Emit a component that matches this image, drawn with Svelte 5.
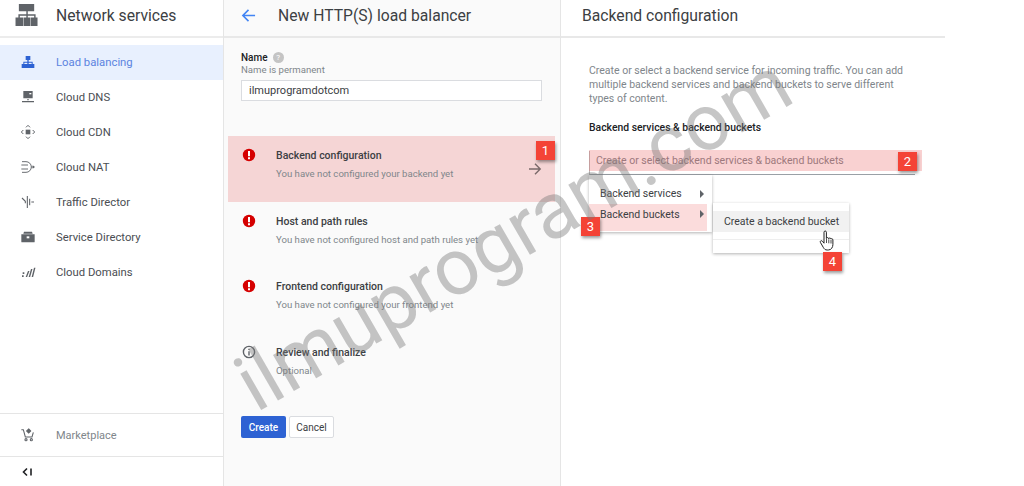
<script lang="ts">
  const navItems = [
    { label: "Load balancing", icon: "lb", active: true },
    { label: "Cloud DNS", icon: "dns" },
    { label: "Cloud CDN", icon: "cdn" },
    { label: "Cloud NAT", icon: "nat" },
    { label: "Traffic Director", icon: "td" },
    { label: "Service Directory", icon: "sd" },
    { label: "Cloud Domains", icon: "dom" },
  ];

  const steps = [
    { title: "Backend configuration", sub: "You have not configured your backend yet", kind: "error", active: true },
    { title: "Host and path rules", sub: "You have not configured host and path rules yet", kind: "error" },
    { title: "Frontend configuration", sub: "You have not configured your frontend yet", kind: "error" },
    { title: "Review and finalize", sub: "Optional", kind: "info" },
  ];
</script>

{#snippet navIcon(name: string)}
  <svg class="nav-icon" viewBox="0 0 24 24" fill="currentColor">
    {#if name === "lb"}
      <path d="M8.5 3h7v6h-2.5v2.5H19V15h2.5v6h-6.5v-6h2.5v-1.7H13V15h2v6H9v-6h2v-1.7H6.5V15H9v6H2.5v-6H5v-3.5h6V9H8.5z" />
    {:else if name === "dns"}
      <path d="M5 3h14v11H5zM11 15h2v2h-2zM3 18h18v2H3z" />
      <path d="M14 6h3v2h-3z" fill="#fff" />
    {:else if name === "cdn"}
      <path d="M8.5 8.5h7v7h-7z" />
      <path d="M9 5l3-3 3 3M9 19l3 3 3-3M5 9l-3 3 3 3M19 9l3 3-3 3" fill="none" stroke="currentColor" stroke-width="1.5" />
    {:else if name === "nat"}
      <path d="M3 4h6a8 8 0 0 1 0 16H3M2 9h10M2 15h10M17 12h3" fill="none" stroke="currentColor" stroke-width="1.4" />
      <path d="M19 9.5l3.5 2.5-3.5 2.5z" />
    {:else if name === "td"}
      <path d="M3 6l5 5v3M11 3v18M14.5 7v10M17 12h4" fill="none" stroke="currentColor" stroke-width="1.6" />
    {:else if name === "sd"}
      <path d="M6 4h12l1 3H5zM2 8h20v11a1 1 0 0 1-1 1H3a1 1 0 0 1-1-1z" />
      <path d="M10 11h4v3h-4z" fill="#fff" />
    {:else}
      <path d="M3 17h2.5v2.5H3zM4 12.5h2.5V15H4zM8.5 19.5l3.5-9h2.2l-3.5 9zM13 19.5l3.5-12h2.2l-3.5 12zM17.5 19.5l3.5-14h2.2l-3.5 14z" />
    {/if}
  </svg>
{/snippet}

{#snippet badge(n: number)}
  <span class="badge">{n}</span>
{/snippet}

<div class="page">
  <aside class="sidebar">
    <header class="side-head">
      <svg class="logo" viewBox="0 0 24 23" fill="#5f6368">
        <path d="M3.5 0h16v7.5h-6.7v3.2H21V14h2v9h-7v-9h3.5v-1.8h-6.7V14h2.7v9H8.5v-9h2.8v-1.8H4.5V14H8v9H0v-9h3v-3.3h8.3V7.5H3.5z" />
      </svg>
      <span class="side-title">Network services</span>
    </header>
    <nav class="nav">
      {#each navItems as item}
        <div class="nav-item" class:active={item.active}>
          {@render navIcon(item.icon)}
          <span>{item.label}</span>
        </div>
      {/each}
    </nav>
    <div class="market">
      <svg class="nav-icon" viewBox="0 0 24 24" fill="none" stroke="currentColor" stroke-width="1.6">
        <path d="M2 4h3l3 11h10l2-7" />
        <circle cx="9" cy="19" r="1.6" />
        <circle cx="17" cy="19" r="1.6" />
        <path d="M13 3l3 3-3 3-3-3z" fill="currentColor" />
      </svg>
      <span>Marketplace</span>
    </div>
    <div class="collapse">
      <svg viewBox="0 0 12 12" width="12" height="12" fill="none" stroke="#202124" stroke-width="1.6">
        <path d="M6 2.5L2.5 6 6 9.5M10 2.5v7" />
      </svg>
    </div>
  </aside>

  <main class="wizard">
    <header class="wiz-head">
      <svg class="back" viewBox="0 0 16 16" fill="none" stroke="#4285f4" stroke-width="1.7">
        <path d="M15 8H2M8 2L2 8l6 6" />
      </svg>
      <h1>New HTTP(S) load balancer</h1>
    </header>

    <div class="name-field">
      <div class="name-label">
        <b>Name</b>
        <span class="help">?</span>
      </div>
      <div class="hint">Name is permanent</div>
      <div class="input">ilmuprogramdotcom</div>
    </div>

    <div class="steps">
      {#each steps as step, i}
        <div class="step" class:active={step.active}>
          {#if step.kind === "error"}
            <svg class="step-icon" viewBox="0 0 14 14">
              <circle cx="7" cy="7" r="6.2" fill="#d50000" />
              <path d="M6 3h2v5.2H6zM6 9.2h2v2H6z" fill="#fff" />
            </svg>
          {:else}
            <svg class="step-icon" viewBox="0 0 14 14">
              <circle cx="7" cy="7" r="5.6" fill="none" stroke="#5f6368" stroke-width="1.4" />
              <path d="M6.3 6.2h1.4v4.2H6.3zM6.3 3.7h1.4v1.4H6.3z" fill="#5f6368" />
            </svg>
          {/if}
          <div class="step-text">
            <div class="step-title">{step.title}</div>
            <div class="step-sub">{step.sub}</div>
          </div>
          {#if i === 0}
            <svg class="step-arrow" viewBox="0 0 14 14" fill="none" stroke="#7a6a6a" stroke-width="1.4">
              <path d="M1 7h11M7 1.8L12.2 7 7 12.2" />
            </svg>
            <div class="badge-1">{@render badge(1)}</div>
          {/if}
        </div>
      {/each}
    </div>

    <div class="actions">
      <button class="primary">Create</button>
      <button class="secondary">Cancel</button>
    </div>
  </main>

  <section class="detail">
    <header class="detail-head">Backend configuration</header>
    <div class="detail-body">
      <p class="intro">
        Create or select a backend service for incoming traffic. You can add<br />
        multiple backend services and backend buckets to serve different<br />
        types of content.
      </p>
      <div class="select-label">Backend services &amp; backend buckets</div>
      <div class="select">
        <span>Create or select backend services &amp; backend buckets</span>
        <div class="select-mark"></div>
        <div class="badge-2">{@render badge(2)}</div>
      </div>
      <div class="menu">
        <div class="menu-row"><span>Backend services</span><i class="caret"></i></div>
        <div class="menu-row hot">
          <span>Backend buckets</span><i class="caret"></i>
          <div class="badge-3">{@render badge(3)}</div>
        </div>
        <div class="submenu">
          <div class="sub-row">Create a backend bucket</div>
          <div class="sub-sep"></div>
          <svg class="hand" viewBox="0 0 16 22">
            <path d="M5 2.2c0-1.6 2.4-1.6 2.4 0v6.3c.2-1.3 2.2-1.2 2.3.2.3-1.1 2.1-1 2.2.4.5-.8 2-.5 2 .9v4.5c0 2.6-1.5 5.5-4.6 5.5H8.2c-2 0-3-1-3.9-2.6L1.4 12.4c-.7-1.3 1-2.4 2-1.2L5 13.2z" fill="#fff" stroke="#222" stroke-width="1" />
            <path d="M7.5 9v4M9.8 9.3v4M12 10v3.5" stroke="#222" stroke-width=".8" fill="none" />
          </svg>
          <div class="badge-4">{@render badge(4)}</div>
        </div>
      </div>
    </div>
  </section>

  <div class="watermark">ilmuprogram.com</div>
</div>

<style>
  :global(body) {
    margin: 0;
    background: #fff;
  }

  .page {
    position: relative;
    width: 1024px;
    height: 486px;
    display: flex;
    overflow: hidden;
    font-family: Roboto, "Liberation Sans", sans-serif;
    font-size: 11px;
    color: #3c4043;
  }

  .sidebar {
    width: 223px;
    height: 486px;
    flex: none;
    display: flex;
    flex-direction: column;
    border-right: 1px solid #e5e5e5;
  }

  .side-head {
    height: 38px;
    box-sizing: border-box;
    flex: none;
    display: flex;
    align-items: center;
    border-bottom: 2px solid #ececec;
    padding-left: 15px;
  }

  .logo {
    width: 24px;
    height: 22px;
    margin-right: 17px;
    margin-top: -6px;
  }

  .side-title {
    font-size: 15.7px;
    color: #3c4043;
    margin-top: -6px;
  }

  .nav {
    flex: 1;
    padding-top: 7px;
  }

  .nav-item {
    height: 35px;
    box-sizing: border-box;
    padding: 0 0 1px 20px;
    display: flex;
    align-items: center;
    color: #4a4d52;
    font-size: 11.3px;
  }

  .nav-item.active {
    background: #e8f0fe;
    color: #5b83e0;
  }

  .nav-item.active .nav-icon {
    color: #2d62d3;
  }

  .nav-icon {
    width: 16px;
    height: 16px;
    margin-right: 20px;
    color: #5f6368;
    flex: none;
  }

  .market {
    height: 42px;
    flex: none;
    display: flex;
    align-items: center;
    padding-left: 20px;
    border-top: 1px solid #e5e5e5;
    border-bottom: 1px solid #e5e5e5;
    color: #80868b;
  }

  .collapse {
    height: 29px;
    flex: none;
    display: flex;
    align-items: center;
    padding-left: 21px;
  }

  .wizard {
    width: 336px;
    height: 486px;
    flex: none;
    background: #fafafa;
    border-right: 1px solid #e5e5e5;
    display: flex;
    flex-direction: column;
  }

  .wiz-head {
    height: 38px;
    box-sizing: border-box;
    flex: none;
    display: flex;
    align-items: center;
    padding-left: 17px;
    border-bottom: 2px solid #e8e8e8;
  }

  .back {
    width: 15px;
    height: 15px;
    margin-right: 22px;
    margin-top: -6px;
  }

  h1 {
    margin: -6px 0 0;
    font-size: 15.7px;
    font-weight: 400;
    color: #3c4043;
  }

  .name-field {
    padding: 13px 18px 0 17px;
    height: 98px;
    flex: none;
    box-sizing: border-box;
  }

  .name-label {
    display: flex;
    align-items: center;
    gap: 5px;
    height: 13px;
  }

  .name-label b {
    font-weight: 500;
    font-size: 10px;
    color: #202124;
  }

  .help {
    width: 11px;
    height: 11px;
    border-radius: 50%;
    background: #c4c4c4;
    color: #fff;
    font-size: 8px;
    line-height: 11px;
    text-align: center;
  }

  .hint {
    font-size: 9.6px;
    line-height: 12px;
    color: #80868b;
  }

  .input {
    margin-top: 4px;
    height: 19px;
    line-height: 19px;
    background: #fff;
    border: 1px solid #dadce0;
    padding-left: 7px;
    font-size: 11px;
    color: #3c4043;
  }

  .steps {
    display: flex;
    flex-direction: column;
    margin-left: 4px;
    margin-right: 5px;
  }

  .step {
    position: relative;
    height: 65.5px;
    display: flex;
    padding: 12px 0 0 14px;
    box-sizing: border-box;
  }

  .step.active {
    background: #f5d5d5;
  }

  .step-icon {
    width: 14px;
    height: 14px;
    flex: none;
    margin-right: 20px;
  }

  .step-text {
    padding-top: 1px;
  }

  .step-title {
    font-weight: 500;
    font-size: 10.5px;
    line-height: 14px;
    color: #3c4043;
  }

  .step-sub {
    margin-top: 4px;
    font-size: 9.6px;
    line-height: 13px;
    color: #80868b;
  }

  .step-arrow {
    position: absolute;
    left: 300px;
    top: 26px;
    width: 14px;
    height: 14px;
  }

  .badge-1 {
    position: absolute;
    right: 0;
    top: 5px;
  }

  .badge {
    display: block;
    width: 19px;
    height: 19px;
    background: #f44336;
    color: #fff;
    font-size: 13px;
    line-height: 19px;
    text-align: center;
    box-shadow: 1px 2px 3px rgba(0, 0, 0, 0.4);
  }

  .actions {
    display: flex;
    gap: 3px;
    margin: 18px 0 0 17px;
  }

  button {
    height: 22px;
    font: inherit;
    font-size: 10px;
    padding: 0;
    border-radius: 2px;
  }

  .primary {
    width: 45px;
    background: #2d62d3;
    border: none;
    color: #fff;
    font-weight: 500;
  }

  .secondary {
    width: 45px;
    background: #fff;
    border: 1px solid #dadce0;
    color: #3c4043;
  }

  .detail {
    width: 384px;
    flex: none;
    height: 486px;
  }

  .detail-head {
    height: 38px;
    box-sizing: border-box;
    border-bottom: 2px solid #e8e8e8;
    font-size: 15.7px;
    line-height: 31px;
    padding-left: 21px;
    color: #3c4043;
  }

  .detail-body {
    padding: 26px 0 0 28px;
  }

  .intro {
    margin: 0;
    font-size: 10.5px;
    line-height: 14px;
    color: #80868b;
    white-space: nowrap;
  }

  .select-label {
    margin-top: 15px;
    font-size: 10.4px;
    font-weight: 500;
    line-height: 14px;
    color: #202124;
  }

  .select {
    position: relative;
    margin-top: 16px;
    width: 326px;
    height: 24px;
    border-bottom: 1px solid #9aa0a6;
    border-left: 1px solid #b9b9b9;
    box-sizing: border-box;
    padding: 3px 0 0 6px;
    line-height: 14px;
    font-size: 10.5px;
    color: #80868b;
  }

  .select-mark {
    position: absolute;
    left: -1px;
    top: -1px;
    width: 333px;
    height: 21px;
    background: rgba(235, 90, 90, 0.28);
  }

  .badge-2 {
    position: absolute;
    left: 308px;
    top: 1px;
  }

  .menu {
    position: relative;
    width: 123px;
    height: 57px;
    padding-top: 8px;
    box-sizing: border-box;
    background: #fff;
    box-shadow: 0 1px 3px rgba(0, 0, 0, 0.3);
  }

  .menu-row {
    position: relative;
    height: 21px;
    display: flex;
    align-items: center;
    justify-content: space-between;
    padding: 0 8px 0 11px;
    font-size: 10.5px;
    color: #3c4043;
  }

  .menu-row.hot {
    background: #fbdcdc;
    height: 27px;
    margin-right: 5px;
    padding: 0 3px 7px 11px;
    box-sizing: border-box;
  }

  .caret {
    width: 0;
    height: 0;
    border-left: 4px solid #5f6368;
    border-top: 4px solid transparent;
    border-bottom: 4px solid transparent;
  }

  .badge-3 {
    position: absolute;
    left: -8px;
    top: 13px;
  }

  .submenu {
    position: absolute;
    left: 124px;
    top: 28px;
    width: 136px;
    height: 50px;
    background: #fff;
    box-shadow: 0 1px 3px rgba(0, 0, 0, 0.3);
    padding-top: 8px;
    box-sizing: border-box;
  }

  .sub-row {
    height: 21px;
    line-height: 21px;
    padding-left: 11px;
    background: #f1f1f1;
    font-size: 10.5px;
    color: #3c4043;
  }

  .sub-sep {
    margin-top: 7px;
    height: 1px;
    background: #eeeeee;
  }

  .hand {
    position: absolute;
    left: 106px;
    top: 27px;
    width: 16px;
    height: 22px;
  }

  .badge-4 {
    position: absolute;
    left: 110px;
    top: 49px;
  }

  .watermark {
    position: absolute;
    left: 256px;
    top: 346px;
    font-family: Roboto, sans-serif;
    font-weight: 400;
    font-size: 79px;
    line-height: 80px;
    color: rgba(120, 120, 120, 0.42);
    transform: rotate(-30deg);
    transform-origin: 0 67px;
    white-space: nowrap;
    pointer-events: none;
  }
</style>
